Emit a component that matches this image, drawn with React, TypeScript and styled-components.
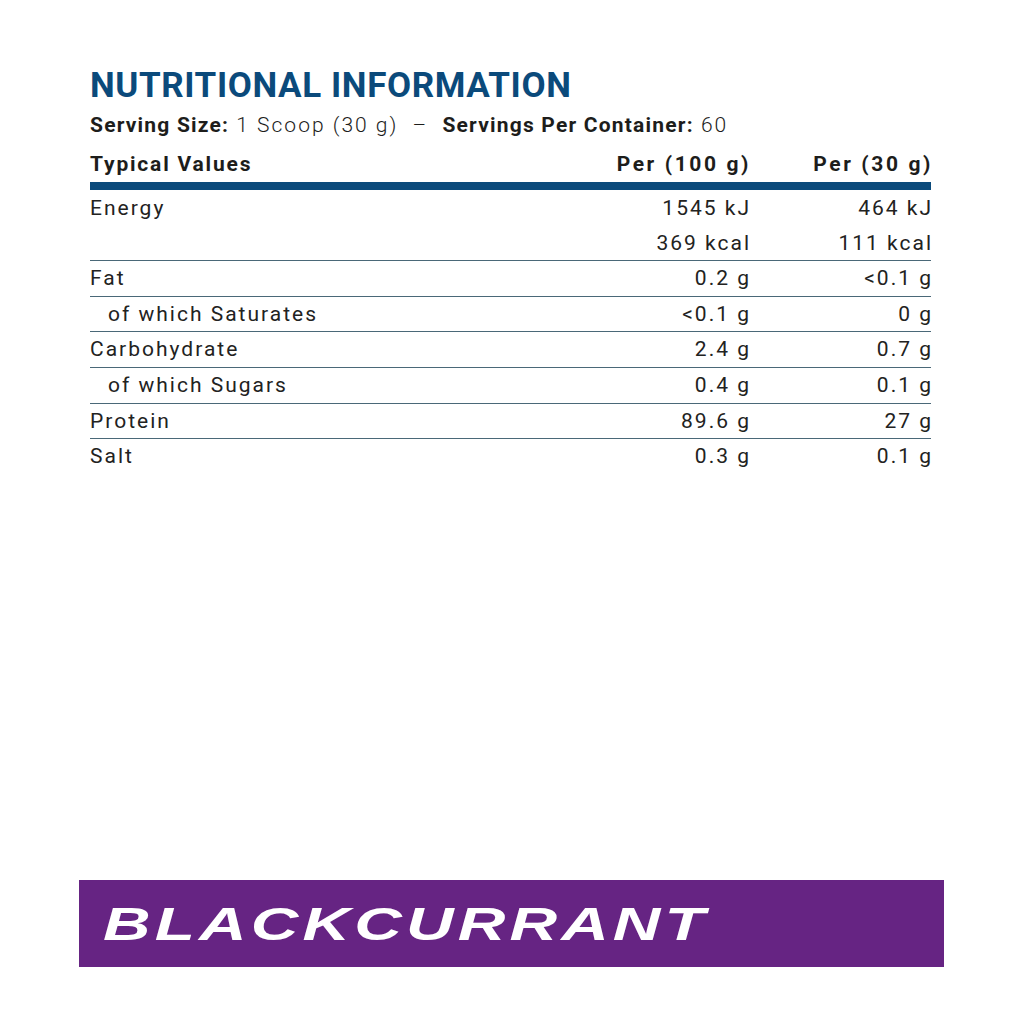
import React from "react";
import styled, { createGlobalStyle } from "styled-components";

const GlobalStyle = createGlobalStyle`
  html, body {
    margin: 0;
    padding: 0;
    background: #ffffff;
  }
  body {
    font-family: Roboto, "Liberation Sans", sans-serif;
    color: #1d1d1b;
  }
`;

interface NutrientRow {
  label: string;
  per100: string[];
  perServing: string[];
  indent?: boolean;
}

const rows: NutrientRow[] = [
  { label: "Energy", per100: ["1545 kJ", "369 kcal"], perServing: ["464 kJ", "111 kcal"] },
  { label: "Fat", per100: ["0.2 g"], perServing: ["<0.1 g"] },
  { label: "of which Saturates", per100: ["<0.1 g"], perServing: ["0 g"], indent: true },
  { label: "Carbohydrate", per100: ["2.4 g"], perServing: ["0.7 g"] },
  { label: "of which Sugars", per100: ["0.4 g"], perServing: ["0.1 g"], indent: true },
  { label: "Protein", per100: ["89.6 g"], perServing: ["27 g"] },
  { label: "Salt", per100: ["0.3 g"], perServing: ["0.1 g"] },
];

export default function App() {
  return (
    <>
      <GlobalStyle />
      <Page>
        <Panel>
          <Title>NUTRITIONAL INFORMATION</Title>
          <Serving>
            <b>Serving Size:</b> 1 Scoop (30 g) &nbsp;–&nbsp; <b>Servings Per Container:</b> 60
          </Serving>
          <HeaderRow>
            <span>Typical Values</span>
            <Right>Per (100 g)</Right>
            <Right>Per (30 g)</Right>
          </HeaderRow>
          <Bar />
          <Body>
            {rows.map((row, i) => (
              <Row key={row.label} $last={i === rows.length - 1}>
                <Label $indent={row.indent}>{row.label}</Label>
                <Values>
                  {row.per100.map((v) => (
                    <Line key={v}>{v}</Line>
                  ))}
                </Values>
                <Values>
                  {row.perServing.map((v) => (
                    <Line key={v}>{v}</Line>
                  ))}
                </Values>
              </Row>
            ))}
          </Body>
        </Panel>
        <FlavourBand>
          <FlavourText>BLACKCURRANT</FlavourText>
        </FlavourBand>
      </Page>
    </>
  );
}

const Page = styled.div`
  width: 1024px;
  height: 1024px;
  display: flex;
  flex-direction: column;
  box-sizing: border-box;
  padding: 65px 0 57px;
`;

const Panel = styled.div`
  margin-left: 90px;
  width: 841px;
`;

const Title = styled.h1`
  margin: 0;
  font-family: Roboto, "Liberation Sans", sans-serif;
  font-weight: 700;
  font-size: 35px;
  line-height: 42px;
  color: #0b4a7b;
  letter-spacing: 0.6px;
`;

const Serving = styled.div`
  margin-top: 4px;
  font-size: 21px;
  line-height: 28px;
  font-weight: 300;
  letter-spacing: 2px;
  white-space: nowrap;

  b {
    font-weight: 700;
    letter-spacing: 1.2px;
  }
`;

const HeaderRow = styled.div`
  display: grid;
  grid-template-columns: 1fr 200px 182px;
  margin-top: 11px;
  font-size: 21px;
  line-height: 28px;
  font-weight: 700;
  letter-spacing: 1.8px;
  margin-right: -2px;
`;

const Right = styled.span`
  text-align: right;
  letter-spacing: 2.6px;
`;

const Bar = styled.div`
  height: 8px;
  margin-top: 4px;
  background: #0b4a7b;
`;

const Body = styled.div`
  padding-top: 1px;
`;

const Row = styled.div<{ $last?: boolean }>`
  display: grid;
  grid-template-columns: 1fr 200px 182px;
  border-bottom: ${({ $last }) => ($last ? "none" : "1px solid #4a6878")};
  font-size: 21px;
  font-weight: 400;
  letter-spacing: 2px;
  color: #222221;
`;

const Label = styled.div<{ $indent?: boolean }>`
  line-height: 34.6px;
  padding-left: ${({ $indent }) => ($indent ? "18px" : "0")};
`;

const Values = styled.div`
  display: flex;
  flex-direction: column;
  align-items: flex-end;
  margin-right: -2px;
`;

const Line = styled.div`
  line-height: 34.6px;
`;

const FlavourBand = styled.div`
  margin-top: auto;
  margin-left: 79px;
  width: 865px;
  height: 87px;
  background: #662483;
  display: flex;
  align-items: center;
  padding-left: 24px;
  box-sizing: border-box;
`;

const FlavourText = styled.div`
  font-family: "Liberation Sans", Arial, sans-serif;
  font-weight: 700;
  font-style: italic;
  font-size: 47px;
  letter-spacing: 3px;
  color: #ffffff;
  transform: scaleX(1.4);
  transform-origin: left center;
`;
